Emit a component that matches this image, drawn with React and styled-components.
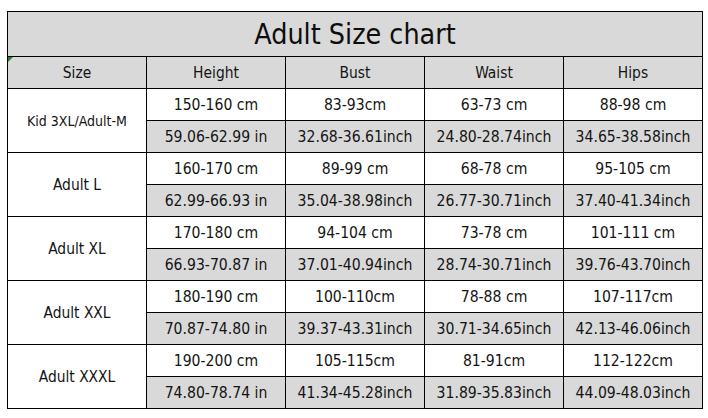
import React from "react";
import styled, { createGlobalStyle } from "styled-components";

const GlobalStyle = createGlobalStyle`
  html, body {
    margin: 0;
    padding: 0;
    background: #ffffff;
  }
  body {
    font-family: "DejaVu Sans Condensed", "DejaVu Sans", sans-serif;
    color: #141414;
  }
`;

const sizes = [
  {
    name: "Kid 3XL/Adult-M",
    small: true,
    cm: ["150-160 cm", "83-93cm", "63-73 cm", "88-98 cm"],
    inch: ["59.06-62.99 in", "32.68-36.61inch", "24.80-28.74inch", "34.65-38.58inch"],
  },
  {
    name: "Adult L",
    cm: ["160-170 cm", "89-99 cm", "68-78 cm", "95-105 cm"],
    inch: ["62.99-66.93 in", "35.04-38.98inch", "26.77-30.71inch", "37.40-41.34inch"],
  },
  {
    name: "Adult XL",
    cm: ["170-180 cm", "94-104 cm", "73-78 cm", "101-111 cm"],
    inch: ["66.93-70.87 in", "37.01-40.94inch", "28.74-30.71inch", "39.76-43.70inch"],
  },
  {
    name: "Adult XXL",
    cm: ["180-190 cm", "100-110cm", "78-88 cm", "107-117cm"],
    inch: ["70.87-74.80 in", "39.37-43.31inch", "30.71-34.65inch", "42.13-46.06inch"],
  },
  {
    name: "Adult XXXL",
    cm: ["190-200 cm", "105-115cm", "81-91cm", "112-122cm"],
    inch: ["74.80-78.74 in", "41.34-45.28inch", "31.89-35.83inch", "44.09-48.03inch"],
  },
];

const headings = ["Size", "Height", "Bust", "Waist", "Hips"];

const App = () => {
  return (
    <Page>
      <GlobalStyle />
      <Chart>
        <Title>Adult Size chart</Title>
        {headings.map((h, i) => (
          <HeadCell key={h} $first={i === 0}>
            {h}
          </HeadCell>
        ))}
        {sizes.map((s) => (
          <React.Fragment key={s.name}>
            <SizeCell $small={s.small}>{s.name}</SizeCell>
            {s.cm.map((v, i) => (
              <Cell key={"cm" + i}>{v}</Cell>
            ))}
            {s.inch.map((v, i) => (
              <Cell key={"in" + i} $shaded>
                {v}
              </Cell>
            ))}
          </React.Fragment>
        ))}
      </Chart>
    </Page>
  );
};

export default App;

const Page = styled.div`
  width: 708px;
  height: 418px;
  padding: 11px 0 0 7px;
  box-sizing: border-box;
`;

const Chart = styled.div`
  display: grid;
  grid-template-columns: repeat(5, 139px);
  grid-template-rows: 45px 32px;
  grid-auto-rows: 32px;
  width: 696px;
  box-sizing: border-box;
  border-top: 1px solid #000;
  border-left: 1px solid #000;
`;

const BaseCell = styled.div`
  display: flex;
  align-items: center;
  justify-content: center;
  border-right: 1px solid #000;
  border-bottom: 1px solid #000;
  font-size: 15.6px;
  white-space: nowrap;
  background: ${(p) => (p.$shaded ? "#d9d9d9" : "#ffffff")};
`;

const Title = styled(BaseCell)`
  grid-column: 1 / -1;
  background: #d9d9d9;
  font-size: 28.4px;
  color: #0d0d0d;
  padding-top: 1px;
`;

const HeadCell = styled(BaseCell)`
  position: relative;
  background: #d9d9d9;
  font-size: 15.4px;

  ${(p) =>
    p.$first &&
    `
    &::before {
      content: "";
      position: absolute;
      left: 0;
      top: 0;
      border-top: 5px solid #2f7d32;
      border-right: 5px solid transparent;
    }
  `}
`;

const SizeCell = styled(BaseCell)`
  grid-row: span 2;
  font-size: ${(p) => (p.$small ? "14px" : "15.4px")};
`;

const Cell = styled(BaseCell)``;
